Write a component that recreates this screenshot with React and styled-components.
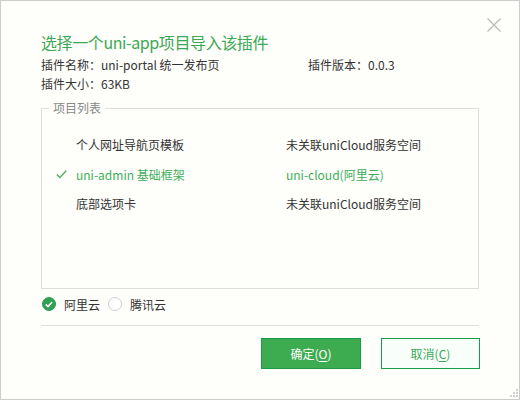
import React from "react";
import styled, { createGlobalStyle } from "styled-components";

const Global = createGlobalStyle`
  html, body { margin: 0; padding: 0; background: #fefefb; }
  body { font-family: "Noto Sans CJK SC", "Noto Sans", sans-serif; }
  * { box-sizing: border-box; }
`;

const Window = styled.div`
  position: relative;
  width: 520px;
  height: 400px;
  border: 1px solid #cdcdcd;
  background: #fefefb;
  padding: 30px 40px 0 40px;
  color: #333;
  font-size: 12px;
`;

const Close = styled.button`
  position: absolute;
  top: 17px;
  right: 18px;
  width: 14px;
  height: 14px;
  padding: 0;
  border: 0;
  background: none;
  display: flex;
`;

const Title = styled.h1`
  margin: 0;
  font-size: 16px;
  font-weight: 400;
  line-height: 22px;
  color: #3ba853;
  letter-spacing: -0.4px;
`;

const Info = styled.div`
  display: grid;
  grid-template-columns: 267px 1fr;
  margin-top: 2px;
  line-height: 19px;
  color: #333;
`;

const Fieldset = styled.fieldset`
  margin: 7px 0 0 0;
  padding: 0;
  border: 1px solid #dddddd;
  min-width: 0;
`;

const Legend = styled.legend`
  margin-left: 7px;
  padding: 0 4px;
  font-size: 12px;
  line-height: 16px;
  color: #888;
`;

const List = styled.div`
  height: 172px;
  padding-top: 14px;
`;

const Row = styled.div`
  display: grid;
  grid-template-columns: 34px 210px 1fr;
  align-items: center;
  height: 29.5px;
  color: ${(p) => (p.$active ? "#3fae5b" : "#333")};
`;

const Mark = styled.span`
  display: flex;
  padding-left: 14px;
`;

const Options = styled.div`
  display: flex;
  align-items: center;
  height: 20px;
  margin-top: 5px;
  padding-left: 1px;
`;

const Option = styled.label`
  display: flex;
  align-items: center;
  gap: 8px;
  margin-right: 8px;
  color: #333;
`;

const Radio = styled.span`
  width: 14px;
  height: 14px;
  border-radius: 50%;
  display: flex;
  align-items: center;
  justify-content: center;
  background: ${(p) => (p.$checked ? "#2f9f52" : "#fff")};
  border: 1px solid ${(p) => (p.$checked ? "#2f9f52" : "#cfcfcf")};
`;

const Divider = styled.div`
  height: 1px;
  background: #e0e0e0;
  margin-top: 11px;
`;

const Buttons = styled.div`
  display: flex;
  justify-content: flex-end;
  gap: 20px;
  margin-top: 12px;
`;

const Button = styled.button`
  width: ${(p) => (p.$primary ? "100px" : "99px")};
  height: 31px;
  font-family: inherit;
  font-size: 12px;
  border: 1px solid ${(p) => (p.$primary ? "#1a9c46" : "#14a049")};
  background: ${(p) => (p.$primary ? "#3dab50" : "#f8fffa")};
  color: ${(p) => (p.$primary ? "#fff" : "#3aa757")};
  padding: 0;
  margin-right: ${(p) => (p.$primary ? "0" : "-1px")};
  u { text-decoration: underline; text-underline-offset: 2px; }
`;

const Grip = styled.svg`
  position: absolute;
  right: 1px;
  bottom: 1px;
`;

const rows = [
  { name: "个人网址导航页模板", cloud: "未关联uniCloud服务空间" },
  { name: "uni-admin 基础框架", cloud: "uni-cloud(阿里云)", active: true },
  { name: "底部选项卡", cloud: "未关联uniCloud服务空间" },
];

export default function App() {
  return (
    <>
      <Global />
      <Window>
        <Close aria-label="close">
          <svg width="14" height="14" viewBox="0 0 14 14">
            <path d="M0.5 0.5 L13.5 13.5 M13.5 0.5 L0.5 13.5" stroke="#b8b8b8" strokeWidth="1.1" fill="none" />
          </svg>
        </Close>
        <Title>选择一个uni-app项目导入该插件</Title>
        <Info>
          <span>插件名称：uni-portal 统一发布页</span>
          <span>插件版本：0.0.3</span>
          <span>插件大小：63KB</span>
        </Info>
        <Fieldset>
          <Legend>项目列表</Legend>
          <List>
            {rows.map((r) => (
              <Row key={r.name} $active={r.active}>
                <Mark>
                  {r.active && (
                    <svg width="11" height="9" viewBox="0 0 11 9">
                      <path d="M0.8 4.6 L3.8 7.6 L10.2 0.8" stroke="#4caf64" strokeWidth="1.4" fill="none" />
                    </svg>
                  )}
                </Mark>
                <span>{r.name}</span>
                <span>{r.cloud}</span>
              </Row>
            ))}
          </List>
        </Fieldset>
        <Options>
          <Option>
            <Radio $checked>
              <svg width="8" height="7" viewBox="0 0 8 7">
                <path d="M0.8 3.4 L3 5.6 L7.2 1" stroke="#fff" strokeWidth="1.6" fill="none" />
              </svg>
            </Radio>
            阿里云
          </Option>
          <Option>
            <Radio />
            腾讯云
          </Option>
        </Options>
        <Divider />
        <Buttons>
          <Button $primary>确定(<u>O</u>)</Button>
          <Button>取消(<u>C</u>)</Button>
        </Buttons>
        <Grip width="10" height="10" viewBox="0 0 10 10">
          {[[8, 0], [5, 3], [8, 3], [2, 6], [5, 6], [8, 6]].map(([x, y]) => (
            <rect key={`${x}-${y}`} x={x} y={y + 1} width="2" height="2" fill="#d2d2d2" />
          ))}
        </Grip>
      </Window>
    </>
  );
}
